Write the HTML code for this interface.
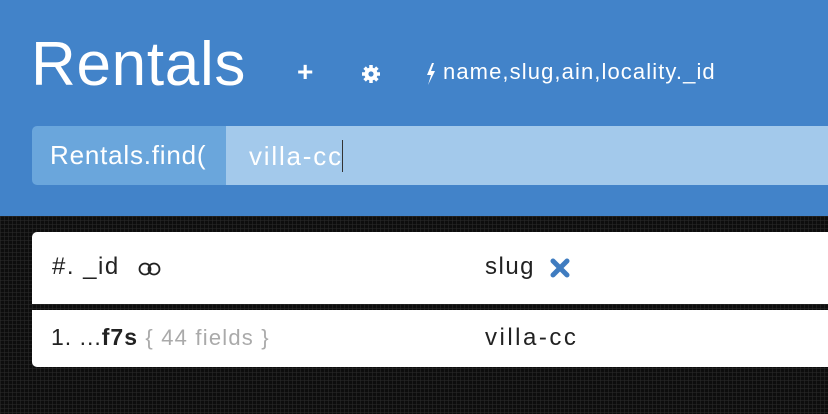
<!DOCTYPE html>
<html><head><style>
body{margin:0;width:828px;height:414px;overflow:hidden;font-family:"Liberation Sans",sans-serif;background:#0d0d0d;position:relative;
background-image:linear-gradient(rgba(40,40,40,.6) 1px,transparent 1px),linear-gradient(90deg,rgba(40,40,40,.6) 1px,transparent 1px);background-size:4px 4px;}
.hdr{position:absolute;left:0;top:0;width:828px;height:216px;background:#4283c9;}
.t{position:absolute;color:#fff;white-space:nowrap}
</style></head><body>
<div class="hdr">
<div class="t" style="left:31px;top:29px;font-size:62px;letter-spacing:0.7px">Rentals</div>
<div class="t" style="left:297px;top:56px;font-size:28px;font-weight:bold">+</div>
<svg class="t" style="left:361px;top:64px" width="20" height="20" viewBox="0 0 20 20"><g fill="#fff"><circle cx="10" cy="10" r="6.5"/><g stroke="#fff" stroke-width="3.5"><line x1="10" y1="1" x2="10" y2="19"/><line x1="1" y1="10" x2="19" y2="10"/><line x1="3.6" y1="3.6" x2="16.4" y2="16.4"/><line x1="16.4" y1="3.6" x2="3.6" y2="16.4"/></g></g><circle cx="10" cy="10" r="2.6" fill="#4283c9"/></svg>
<svg class="t" style="left:425px;top:62px" width="12" height="24" viewBox="0 0 12 24"><path d="M7 1 L2 13 L6 13 L3 23 L10 9 L6 9 L9 1Z" fill="#fff"/></svg>
<div class="t" style="left:443px;top:59px;font-size:22px;letter-spacing:1.1px">name,slug,ain,locality._id</div>
<div style="position:absolute;left:32px;top:126px;width:194px;height:59px;background:#6aa6dc;border-radius:5px 0 0 5px"></div>
<div style="position:absolute;left:226px;top:126px;width:602px;height:59px;background:#a3c9eb"></div>
<div class="t" style="left:50px;top:140px;font-size:26px;letter-spacing:0.8px">Rentals.find(</div>
<div class="t" style="left:249px;top:140px;font-size:26px;letter-spacing:1.8px">villa-c<span style="letter-spacing:0">c</span><span style="display:inline-block;width:1px;height:32px;background:#333;vertical-align:-7px;margin-left:1px"></span></div>
</div>
<div style="position:absolute;left:32px;top:232px;width:800px;height:72px;background:#fff;border-radius:5px 0 0 0"></div>
<div style="position:absolute;left:32px;top:310px;width:800px;height:57px;background:#fff;border-radius:0 0 0 5px"></div>
<div class="t" style="left:52px;top:253px;font-size:24px;letter-spacing:1.5px;color:#222">#. _id</div>
<svg class="t" style="left:137px;top:262px" width="26" height="14" viewBox="0 0 26 14"><g fill="none" stroke="#222" stroke-width="1.8"><circle cx="8" cy="7" r="5.5"/><circle cx="17" cy="7" r="5.5"/></g></svg>
<div class="t" style="left:485px;top:253px;font-size:24px;letter-spacing:1.5px;color:#222">slug</div>
<svg class="t" style="left:549px;top:257px" width="22" height="22" viewBox="0 0 22 22"><path d="M4 4L18 18M18 4L4 18" stroke="#3f7cc0" stroke-width="5" stroke-linecap="round"/></svg>
<div class="t" style="left:51px;top:324px;font-size:23px;letter-spacing:1px;color:#222">1. ...<b>f7s</b> <span style="color:#aaa;font-size:22px;letter-spacing:1.2px">{ 44 fields }</span></div>
<div class="t" style="left:485px;top:324px;font-size:24px;letter-spacing:2.5px;color:#222">villa-cc</div>
</body></html>
